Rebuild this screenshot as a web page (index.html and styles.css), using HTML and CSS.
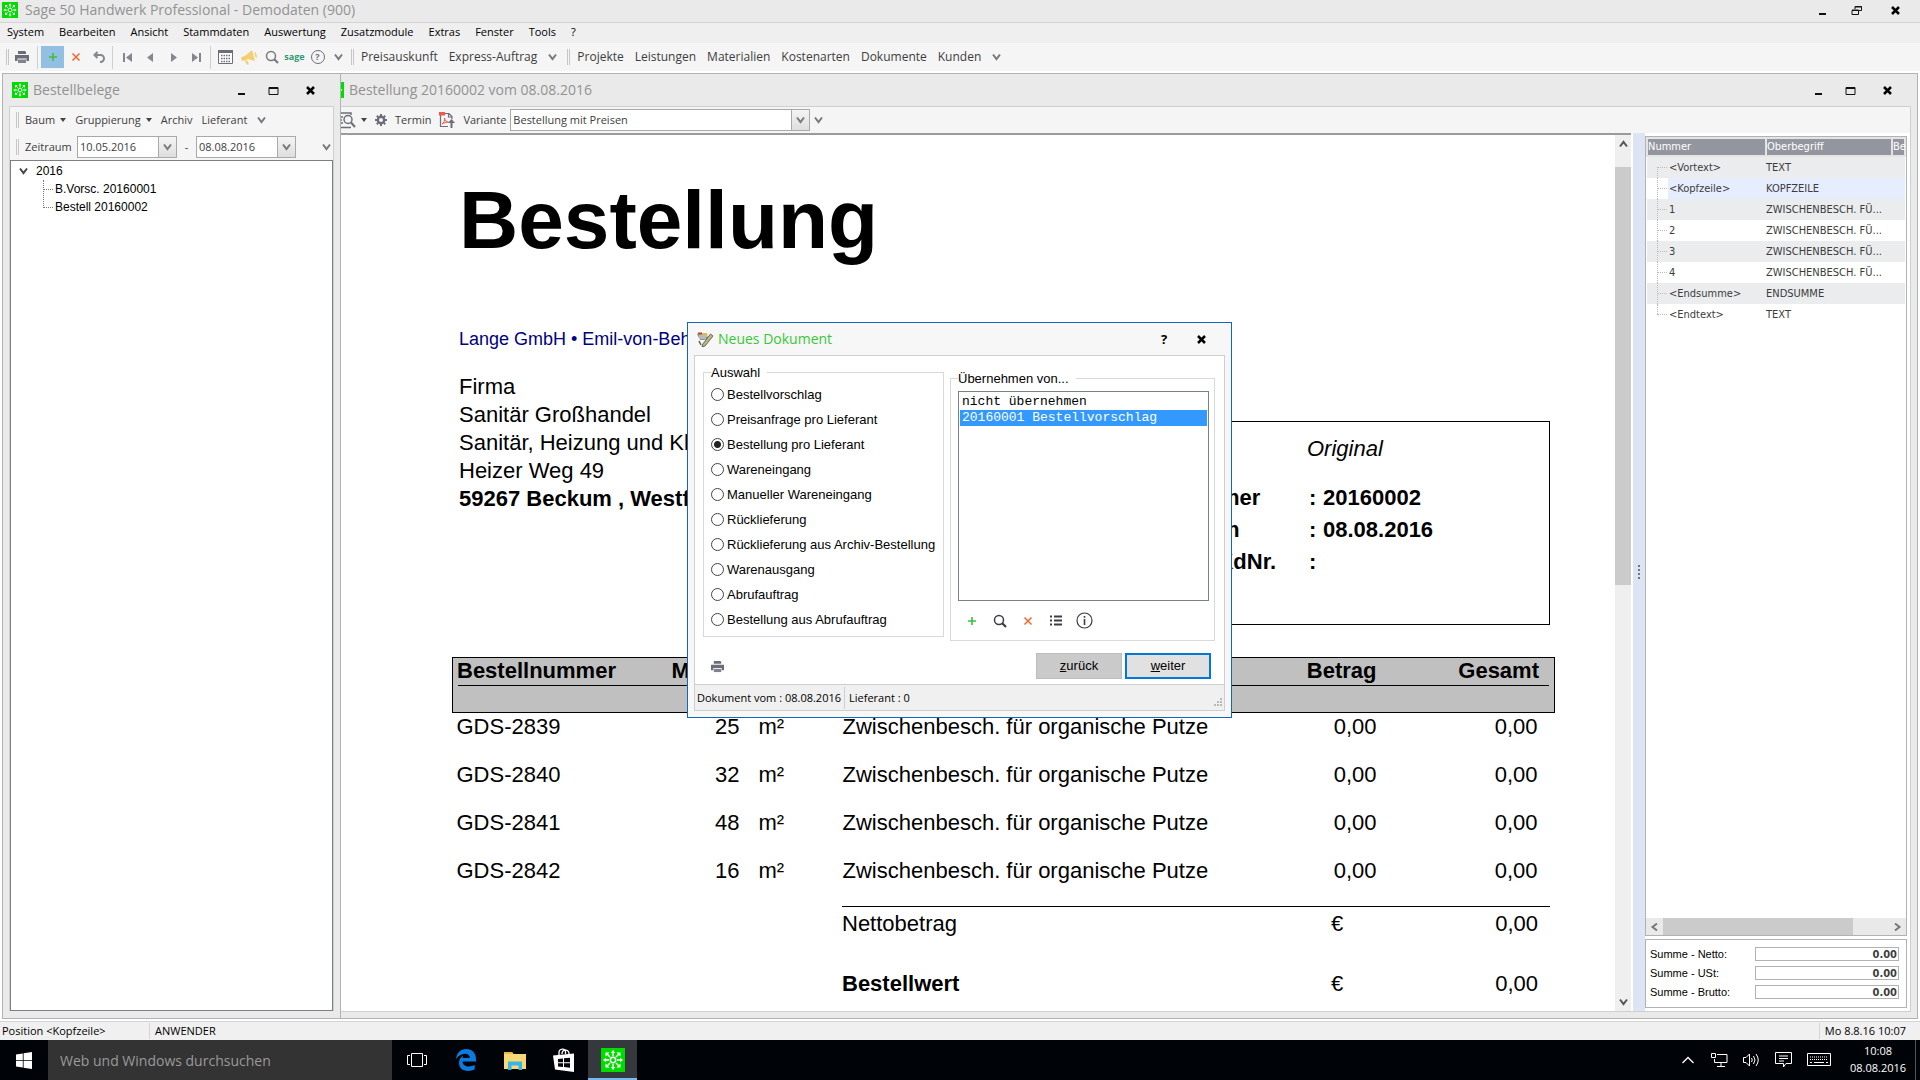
FILE: index.html
```html
<!DOCTYPE html>
<html lang="de">
<head>
<meta charset="utf-8">
<title>Sage 50 Handwerk Professional - Demodaten (900)</title>
<link rel="stylesheet" href="styles.css">
</head>
<body>
<svg class="symbols" aria-hidden="true">
  <symbol id="logo" viewBox="0 0 24 24">
    <rect width="24" height="24" fill="#00dc00"/>
    <g fill="none" stroke="#fff" stroke-width="1.400"><circle cx="12" cy="12" r="2.700"/><path d="M12 8V4M12 16v4M8 12H4M16 12h4M9 9 6 6M15 9l3-3M9 15l-3 3M15 15l3 3"/></g>
    <g fill="#fff"><path d="M12 2l2.200 3H9.800zM12 22l2.200-3H9.800zM2 12l3-2.200v4.400zM22 12l-3-2.200v4.400zM4.500 4.500h4l-4 4zM19.500 4.500h-4l4 4zM4.500 19.500h4l-4-4zM19.500 19.500h-4l4-4z"/></g>
  </symbol>
  <symbol id="chev" viewBox="0 0 9 8"><path d="M1 1.500 4.500 6 8 1.500" fill="none" stroke="currentColor" stroke-width="2"/></symbol>
  <symbol id="caret" viewBox="0 0 6 4"><path d="M0 0h6L3 4z" fill="#444"/></symbol>
  <symbol id="printer" viewBox="0 0 14 14"><path d="M3 1h7l1 1v2H3z" fill="#6b6e78"/><path d="M0 5h14v6h-2.500V8.500h-9V11H0z" fill="#6b6e78"/><path d="M3 9.500h8V13H3z" fill="#80838c"/></symbol>
  <symbol id="plus" viewBox="0 0 10 10"><path d="M5 1v8M1 5h8" stroke="#3cc03c" stroke-width="1.600"/></symbol>
  <symbol id="cross" viewBox="0 0 10 10"><path d="M1.500 1.500l7 7M8.500 1.500l-7 7" stroke="#f2682c" stroke-width="1.500"/></symbol>
  <symbol id="search" viewBox="0 0 14 14"><g fill="none" stroke="currentColor"><circle cx="6" cy="6" r="4.500" stroke-width="1.500"/><path d="M9.300 9.300 13 13" stroke-width="2.200"/></g></symbol>
  <symbol id="min" viewBox="0 0 11 11"><path d="M2 8h7v2H2z" fill="#111"/></symbol>
  <symbol id="max" viewBox="0 0 11 11"><path d="M1 2.500h9v7H1z" fill="none" stroke="#111"/><path d="M1 2h9v2H1z" fill="#111"/></symbol>
  <symbol id="restore" viewBox="0 0 11 11"><path d="M4 4V1.500h6.500v4H8" fill="none" stroke="#111"/><path d="M1 5.500h6.500v4H1z" fill="none" stroke="#111"/><path d="M4 1h6.500v1.500H4zM1 4.500h6.500V6H1z" fill="#111"/></symbol>
  <symbol id="close" viewBox="0 0 11 11"><path d="M2 2l7 7M9 2l-7 7" stroke="#000" stroke-width="2.500"/></symbol>
</svg>

<header class="titlebar titlebar-main">
  <svg class="logo"><use href="#logo"/></svg>
  <h1 class="caption">Sage 50 Handwerk Professional - Demodaten (900)</h1>
  <button class="winbtn" aria-label="Minimieren"><svg><use href="#min"/></svg></button>
  <button class="winbtn" aria-label="Wiederherstellen"><svg><use href="#restore"/></svg></button>
  <button class="winbtn winbtn-close" aria-label="Schließen"><svg><use href="#close"/></svg></button>
</header>

<nav class="menubar">
  <button>System</button><button>Bearbeiten</button><button>Ansicht</button><button>Stammdaten</button><button>Auswertung</button><button>Zusatzmodule</button><button>Extras</button><button>Fenster</button><button>Tools</button><button>?</button>
</nav>

<div class="toolbar toolbar-main">
  <span class="grip"></span>
  <button class="tool" aria-label="Drucken"><svg width="14" height="14"><use href="#printer"/></svg></button>
  <span class="sep"></span>
  <button class="tool tool-active" aria-label="Neu"><svg width="10" height="10"><use href="#plus"/></svg></button>
  <button class="tool" aria-label="Löschen"><svg width="10" height="10"><use href="#cross"/></svg></button>
  <button class="tool" aria-label="Rückgängig"><svg width="12" height="12" viewBox="0 0 12 12"><path d="M4.500 1 1.500 4l3 3M2 4h5.500a3 3 0 0 1 0 7H7" fill="none" stroke="#85878e" stroke-width="2"/></svg></button>
  <span class="sep"></span>
  <button class="tool" aria-label="Erster"><svg width="9" height="9" viewBox="0 0 9 9"><path d="M0 0h2v9H0zM9 0v9L3 4.500z" fill="#85878e"/></svg></button>
  <button class="tool" aria-label="Zurück"><svg width="9" height="9" viewBox="0 0 9 9"><path d="M7 0v9L1 4.500z" fill="#85878e"/></svg></button>
  <button class="tool" aria-label="Weiter"><svg width="9" height="9" viewBox="0 0 9 9"><path d="M2 0v9l6-4.500z" fill="#85878e"/></svg></button>
  <button class="tool" aria-label="Letzter"><svg width="9" height="9" viewBox="0 0 9 9"><path d="M7 0h2v9H7zM0 0v9l6-4.500z" fill="#85878e"/></svg></button>
  <span class="sep"></span>
  <button class="tool" aria-label="Kalender"><svg width="15" height="14" viewBox="0 0 15 14"><path d="M.5.500h14v13H.5z" fill="#fff" stroke="#6b6e78"/><path d="M0 0h15v3H0z" fill="#6b6e78"/><path d="M3 5.500h10M3 8.500h10M3 11.500h10" stroke="#6b6e78" stroke-width="1.500" stroke-dasharray="1.500 1"/></svg></button>
  <button class="tool" aria-label="Meldung"><svg width="16" height="16" viewBox="0 0 16 16"><path d="M11 1l3 11-7-2-3 1.500L1 12 0 8.500l4.500-2zM4 12l2-.8 2 4-2 .5z" fill="#f3cf72"/><path d="M14 3.500l1.500 5" stroke="#f3cf72" stroke-width="1.500"/></svg></button>
  <button class="tool" aria-label="Suchen"><svg width="14" height="14"><use href="#search"/></svg></button>
  <button class="tool tool-sage">sage</button>
  <button class="tool" aria-label="Hilfe"><span class="round">?</span></button>
  <button class="tool tool-chev" aria-label="Mehr"><svg width="9" height="8"><use href="#chev"/></svg></button>
  <span class="grip grip-gap"></span>
  <button class="word">Preisauskunft</button>
  <button class="word">Express-Auftrag</button>
  <button class="tool" aria-label="Mehr"><svg width="9" height="8"><use href="#chev"/></svg></button>
  <span class="grip"></span>
  <button class="word">Projekte</button><button class="word">Leistungen</button><button class="word">Materialien</button><button class="word">Kostenarten</button><button class="word">Dokumente</button><button class="word">Kunden</button>
  <button class="tool" aria-label="Mehr"><svg width="9" height="8"><use href="#chev"/></svg></button>
</div>

<main class="mdi">
  <section class="window window-left">
    <header class="titlebar">
      <svg class="logo"><use href="#logo"/></svg>
      <h2 class="caption">Bestellbelege</h2>
      <button class="winbtn" aria-label="Minimieren"><svg><use href="#min"/></svg></button>
      <button class="winbtn" aria-label="Maximieren"><svg><use href="#max"/></svg></button>
      <button class="winbtn winbtn-close" aria-label="Schließen"><svg><use href="#close"/></svg></button>
    </header>
    <div class="inner">
      <div class="toolbar toolbar-left">
        <span class="grip"></span>
        <button class="word small">Baum <svg width="6" height="4"><use href="#caret"/></svg></button>
        <button class="word small">Gruppierung <svg width="6" height="4"><use href="#caret"/></svg></button>
        <button class="word small">Archiv</button>
        <button class="word small">Lieferant</button>
        <button class="more" aria-label="Mehr"><svg width="9" height="8"><use href="#chev"/></svg></button>
      </div>
      <div class="toolbar toolbar-dates">
        <span class="grip"></span>
        <label class="small" for="from">Zeitraum</label>
        <span class="combo combo-date"><input id="from" value="10.05.2016"><button aria-label="Kalender öffnen"><svg width="9" height="8"><use href="#chev"/></svg></button></span>
        <span class="dash">-</span>
        <span class="combo combo-date"><input aria-label="Bis" value="08.08.2016"><button aria-label="Kalender öffnen"><svg width="9" height="8"><use href="#chev"/></svg></button></span>
        <button class="more push" aria-label="Mehr"><svg width="9" height="8"><use href="#chev"/></svg></button>
      </div>
      <div class="tree">
        <div class="tree-root"><svg width="9" height="8"><use href="#chev"/></svg><span class="dot"></span>2016</div>
        <ul>
          <li>B.Vorsc. 20160001</li>
          <li>Bestell 20160002</li>
        </ul>
      </div>
    </div>
  </section>

  <section class="window window-right">
    <header class="titlebar">
      <svg class="logo logo-cut" viewBox="20 0 4 24" preserveAspectRatio="none"><use href="#logo" width="24" height="24"/></svg>
      <h2 class="caption">Bestellung 20160002 vom 08.08.2016</h2>
      <button class="winbtn" aria-label="Minimieren"><svg><use href="#min"/></svg></button>
      <button class="winbtn" aria-label="Maximieren"><svg><use href="#max"/></svg></button>
      <button class="winbtn winbtn-close" aria-label="Schließen"><svg><use href="#close"/></svg></button>
    </header>
    <div class="inner">
      <div class="toolbar toolbar-doc">
        <button class="word" aria-label="Vorschau"><svg width="15" height="17" viewBox="1 0 15 17"><path d="M0 1h11v2M0 15.500h11M0 5h3M0 8h2M0 11h3" fill="none" stroke="#6b6e78" stroke-width="1.500"/><circle cx="8" cy="7.500" r="4" fill="none" stroke="#6b6e78" stroke-width="1.500"/><path d="M11 10.500l4 4.500" stroke="#6b6e78" stroke-width="2"/></svg><svg width="6" height="4"><use href="#caret"/></svg></button>
        <button class="word" aria-label="Einstellungen"><svg width="12" height="12" viewBox="0 0 12 12"><circle cx="6" cy="6" r="3.200" fill="none" stroke="#6b6e78" stroke-width="2.400"/><path d="M6 0v2M6 10v2M0 6h2M10 6h2M1.800 1.800l1.400 1.400M8.800 8.800l1.400 1.400M1.800 10.200l1.400-1.400M8.800 3.200l1.400-1.400" stroke="#6b6e78" stroke-width="2"/></svg></button>
        <button class="word small">Termin</button>
        <button class="word" aria-label="PDF"><svg width="16" height="16" viewBox="0 0 16 16"><path d="M1.500 3v11.500H9M6 1.500h4l3 3V7M9.500 1.500V5H13" fill="none" stroke="#6b6e78" stroke-width="1.200"/><path d="M0 0h6v3.500H0z" fill="#f0584c"/><path d="M3 12c2-1 3-4 2.500-6 .5 2.500 2 4 4 4.200C7 10 5 11 3 12z" fill="none" stroke="#f0584c"/><path d="M12.500 7l3.500 4h-2.500v5h-2v-5H9z" fill="#6b6e78"/></svg></button>
        <label class="small" for="variant">Variante</label>
        <span class="combo combo-variant"><select id="variant"><option>Bestellung mit Preisen</option></select><span class="arrow"><svg width="9" height="8"><use href="#chev"/></svg></span></span>
        <button class="more" aria-label="Mehr"><svg width="9" height="8"><use href="#chev"/></svg></button>
      </div>
      <div class="split">
        <div class="viewer">
          <article class="paper">
            <h3 class="doc-title">Bestellung</h3>
            <div class="letterhead">
              <div class="address">
                <p class="sender">Lange GmbH • Emil-von-Behring-Str.</p>
                <p>Firma</p>
                <p>Sanitär Großhandel</p>
                <p>Sanitär, Heizung und Klima</p>
                <p>Heizer Weg 49</p>
                <p><b>59267 Beckum , Westf.</b></p>
              </div>
              <div class="infobox">
                <p class="original">Original</p>
                <dl>
                  <dt>Nummer</dt><dd>:</dd><dd>20160002</dd>
                  <dt>Datum</dt><dd>:</dd><dd>08.08.2016</dd>
                  <dt>Ihre KdNr.</dt><dd>:</dd><dd></dd>
                </dl>
              </div>
            </div>
            <table class="positions">
              <colgroup><col class="c-nr"><col class="c-qty"><col class="c-unit"><col><col class="c-amount"><col class="c-total"></colgroup>
              <thead>
                <tr><th>Bestellnummer</th><th>Menge</th><th></th><th></th><th class="num">Betrag</th><th class="num last">Gesamt</th></tr>
                <tr><td colspan="6" class="rule"><hr></td></tr>
              </thead>
              <tbody>
                <tr><td>GDS-2839</td><td class="num qty">25</td><td class="unit">m²</td><td>Zwischenbesch. für organische Putze</td><td class="num">0,00</td><td class="num last">0,00</td></tr>
                <tr><td>GDS-2840</td><td class="num qty">32</td><td class="unit">m²</td><td>Zwischenbesch. für organische Putze</td><td class="num">0,00</td><td class="num last">0,00</td></tr>
                <tr><td>GDS-2841</td><td class="num qty">48</td><td class="unit">m²</td><td>Zwischenbesch. für organische Putze</td><td class="num">0,00</td><td class="num last">0,00</td></tr>
                <tr><td>GDS-2842</td><td class="num qty">16</td><td class="unit">m²</td><td>Zwischenbesch. für organische Putze</td><td class="num">0,00</td><td class="num last">0,00</td></tr>
              </tbody>
            </table>
            <div class="sums">
              <p><span>Nettobetrag</span><span>€</span><span class="val">0,00</span></p>
              <p><b>Bestellwert</b><span>€</span><span class="val">0,00</span></p>
            </div>
          </article>
          <div class="vscroll">
            <svg class="up" width="9" height="8"><use href="#chev"/></svg>
            <div class="vtrack"><div class="vthumb"></div></div>
            <svg width="9" height="8"><use href="#chev"/></svg>
          </div>
        </div>
        <div class="splitter"></div>
        <aside class="side">
          <div class="grid-box">
            <table class="grid">
              <colgroup><col class="g-nr"><col class="g-term"><col></colgroup>
              <thead><tr><th>Nummer</th><th>Oberbegriff</th><th>Be</th></tr></thead>
              <tbody>
                <tr><td class="first"><span>&lt;Vortext&gt;</span></td><td>TEXT</td><td></td></tr>
                <tr class="hot"><td><span>&lt;Kopfzeile&gt;</span></td><td>KOPFZEILE</td><td></td></tr>
                <tr><td><span>1</span></td><td>ZWISCHENBESCH. FÜ...</td><td></td></tr>
                <tr><td><span>2</span></td><td>ZWISCHENBESCH. FÜ...</td><td></td></tr>
                <tr><td><span>3</span></td><td>ZWISCHENBESCH. FÜ...</td><td></td></tr>
                <tr><td><span>4</span></td><td>ZWISCHENBESCH. FÜ...</td><td></td></tr>
                <tr><td><span>&lt;Endsumme&gt;</span></td><td>ENDSUMME</td><td></td></tr>
                <tr><td class="final"><span>&lt;Endtext&gt;</span></td><td>TEXT</td><td></td></tr>
              </tbody>
            </table>
            <div class="hscroll">
              <svg class="left" width="9" height="8"><use href="#chev"/></svg>
              <div class="htrack"><div class="hthumb"></div></div>
              <svg class="right" width="9" height="8"><use href="#chev"/></svg>
            </div>
          </div>
          <div class="totals">
            <label for="net">Summe - Netto:</label><input id="net" value="0.00">
            <label for="vat">Summe - USt:</label><input id="vat" value="0.00">
            <label for="gross">Summe - Brutto:</label><input id="gross" value="0.00">
          </div>
        </aside>
      </div>
    </div>
  </section>
</main>

<footer class="statusbar">
  <span class="status-pos">Position &lt;Kopfzeile&gt;</span>
  <span class="status-user">ANWENDER</span>
  <span class="status-time">Mo 8.8.16 10:07</span>
</footer>

<div class="taskbar">
  <button class="start" aria-label="Start"><svg width="16" height="17" viewBox="0 0 16 17"><path d="M0 2.500 6.800 1.500V8H0zM7.600 1.300 16 0v8H7.600zM0 8.800h6.800v6.700L0 14.500zM7.600 8.800H16V17l-8.400-1.300z" fill="#fff"/></svg></button>
  <input class="websearch" aria-label="Suche" placeholder="Web und Windows durchsuchen">
  <button class="task" aria-label="Aktive Anwendungen"><svg width="20" height="14" viewBox="0 0 20 14"><path d="M4.500.500h11v13h-11zM3 2.500H.5v9H3M17 2.500h2.500v9H17" fill="none" stroke="#fff"/></svg></button>
  <button class="task" aria-label="Edge"><svg width="20" height="22" viewBox="0 0 20 22"><path d="M0 10C.6 4 4.500 0 10.300 0 16 0 20 4 20 9.800V12.500H6.500c.2 3.400 3 5 6.200 5 2.200 0 4.200-.6 6-1.700v4.500C16.800 21.400 14.500 22 12 22 6.500 22 3 18.800 3 13.800c0-3.200 1.600-6 4.600-7.600C6.900 7 6.600 8 6.500 9h7.300c0-2.700-1.500-4.300-4.600-4.300C5.400 4.700 2.200 6.800 0 10z" fill="#0a7be0"/></svg></button>
  <button class="task" aria-label="Explorer"><svg width="22" height="19" viewBox="0 0 22 19"><path d="M0 1h8l1.500 2H22v15H0z" fill="#f8d775"/><path d="M0 1h8l1.500 2H0z" fill="#e6b84a"/><path d="M4 19v-8.500h14V19h-3.500v-4.500h-7V19z" fill="#35b6ea"/></svg></button>
  <button class="task" aria-label="Store"><svg width="22" height="24" viewBox="0 0 22 24"><path d="M6 7V4.500c0-4 6.500-5 6.500-.5V6M9 6c0-5 7-5 7-.5V6" fill="none" stroke="#fff" stroke-width="1.300"/><path d="M0 7.500 21 5.500V24L2 21.500z" fill="#fff"/><path d="M5 11l5-.5v3.800H5zM11 10.300l6-.5v4.500h-6zM5 15.200h5V19l-5-.5zM11 15.200h6v4.500l-6-.6z" fill="#000408"/></svg></button>
  <button class="task task-active" aria-label="Sage 50"><svg width="24" height="24"><use href="#logo"/></svg></button>
  <div class="tray">
    <svg width="16" height="8" viewBox="0 0 16 8"><path d="M2.500 7 8 1.500 13.500 7" fill="none" stroke="#fff" stroke-width="1.300"/></svg>
    <svg width="17" height="14" viewBox="0 0 17 14"><path d="M6 1.500h10v8H3.500V6M10 10v3M6 13.500h8M.5.500h4v4h-4z" fill="none" stroke="#fff"/></svg>
    <svg width="17" height="14" viewBox="0 0 17 14"><path d="M.5 4.500H3L6.500 1v12L3 9.500H.5zM8.500 5q1.500 2 0 4M10.500 3q3 4 0 8M13 1q4.500 6 0 12" fill="none" stroke="#fff"/></svg>
    <svg width="17" height="16" viewBox="0 0 17 16"><path d="M.5.500h16v11H11L8.500 15V11.500h-8zM4 4h9M4 6.500h9M4 9h5" fill="none" stroke="#fff"/></svg>
    <svg width="24" height="14" viewBox="0 0 24 14"><path d="M.5.500h23v12H.5z" fill="none" stroke="#fff"/><path d="M3 4h18M3 6.500h18" stroke="#fff" stroke-dasharray="1 1"/><path d="M3 9.500h2M7 9.500h10M19 9.500h2" stroke="#fff"/></svg>
    <p class="clock">10:08<br>08.08.2016</p>
    <span class="show-desktop"></span>
  </div>
</div>

<div class="dialog" role="dialog" aria-labelledby="dlg-title">
  <header class="dialog-title">
    <svg width="16" height="16" viewBox="0 0 16 16"><path d="M0 3h10l1 5-4 1H3z" fill="#8a8f8a"/><path d="M1 1.500h4V3H1z" fill="#c03a2a"/><path d="M5 2h5v2H5z" fill="#e8b93a"/><path d="M2 5h8M2 7h7" stroke="#e4e8e4"/><path d="M13.500 3 16 5l-8 10-3 1 .8-3z" fill="#b8b884" stroke="#4d5040" stroke-width=".8"/><path d="M2 10l2 4" stroke="#58664e" stroke-width="1.500"/></svg>
    <h2 id="dlg-title">Neues Dokument</h2>
    <button class="winbtn help">?</button>
    <button class="winbtn winbtn-close" aria-label="Schließen"><svg><use href="#close"/></svg></button>
  </header>
  <div class="dialog-frame">
    <div class="dialog-body">
      <fieldset class="choice">
        <legend>Auswahl</legend>
        <label><input type="radio" name="kind">Bestellvorschlag</label>
        <label><input type="radio" name="kind">Preisanfrage pro Lieferant</label>
        <label><input type="radio" name="kind" checked>Bestellung pro Lieferant</label>
        <label><input type="radio" name="kind">Wareneingang</label>
        <label><input type="radio" name="kind">Manueller Wareneingang</label>
        <label><input type="radio" name="kind">Rücklieferung</label>
        <label><input type="radio" name="kind">Rücklieferung aus Archiv-Bestellung</label>
        <label><input type="radio" name="kind">Warenausgang</label>
        <label><input type="radio" name="kind">Abrufauftrag</label>
        <label><input type="radio" name="kind">Bestellung aus Abrufauftrag</label>
      </fieldset>
      <fieldset class="source">
        <legend>Übernehmen von...</legend>
        <select size="13" aria-label="Übernehmen von">
          <option>nicht übernehmen</option>
          <option selected>20160001 Bestellvorschlag</option>
        </select>
        <div class="source-tools">
          <button aria-label="Neu"><svg width="10" height="10"><use href="#plus"/></svg></button>
          <button aria-label="Suchen"><svg width="14" height="14"><use href="#search"/></svg></button>
          <button aria-label="Löschen"><svg width="10" height="10"><use href="#cross"/></svg></button>
          <button aria-label="Liste"><svg width="12" height="11" viewBox="0 0 12 11"><path d="M0 1.500h2M0 5.500h2M0 9.500h2M4 1.500h8M4 5.500h8M4 9.500h8" stroke="#3a3d46" stroke-width="2"/></svg></button>
          <button aria-label="Info"><svg width="17" height="17" viewBox="0 0 17 17"><circle cx="8.500" cy="8.500" r="7.500" fill="none" stroke="#3a3d46" stroke-width="1.200"/><path d="M8.500 7v6M8.500 4v1.800" stroke="#3a3d46" stroke-width="1.600"/></svg></button>
        </div>
      </fieldset>
    </div>
    <div class="dialog-actions">
      <button class="print" aria-label="Drucken"><svg width="13" height="13"><use href="#printer"/></svg></button>
      <button class="btn"><u>z</u>urück</button>
      <button class="btn btn-default"><u>w</u>eiter</button>
    </div>
    <footer class="dialog-status">
      <span>Dokument vom : 08.08.2016</span><span>Lieferant : 0</span>
      <svg width="9" height="9" viewBox="0 0 9 9"><path d="M7 0h2v2H7zM7 3h2v2H7zM7 6h2v2H7zM4 3h2v2H4zM4 6h2v2H4zM1 6h2v2H1z" fill="#b8b8b8"/></svg>
    </footer>
  </div>
</div>
</body>
</html>
```
FILE: styles.css
```css
* { box-sizing: border-box; }

:root {
  --ui: "Open Sans", "Noto Sans", sans-serif;
  --arial: "Liberation Sans", Arial, sans-serif;
  --tahoma: "DejaVu Sans Condensed", "DejaVu Sans", sans-serif;
  --line: #cfcfcf;
}

body {
  margin: 0;
  height: 100vh;
  display: flex;
  flex-direction: column;
  overflow: hidden;
  background: #fff;
  color: #000;
  font: 11px/16px var(--ui);
}

h1, h2, h3, p, ul, dl { margin: 0; padding: 0; font-weight: 400; }
dd { margin: 0; }
button { margin: 0; padding: 0; border: 0; background: none; font: inherit; color: inherit; }
input, select { font: inherit; color: inherit; }
svg { display: block; flex: none; }
.symbols { position: absolute; width: 0; height: 0; }

/* Title bars */
.titlebar { display: flex; align-items: center; height: 32px; padding: 0 9px; gap: 5px; background: #eaeaea; flex: none; }
.titlebar-main { height: 23px; padding: 0 4px 2px 2px; gap: 7px; border-bottom: 1px solid #d4d4d4; }
.caption { flex: 1; font-size: 14px; line-height: 20px; color: #929292; white-space: nowrap; }
.logo { width: 16px; height: 16px; }
.window-right .titlebar { padding-left: 0; }
.logo-cut { width: 3px; }
.winbtn { width: 32px; height: 20px; display: flex; align-items: center; justify-content: center; }
.titlebar .winbtn { margin-left: -5px; }
.winbtn svg { width: 11px; height: 11px; }
.titlebar .winbtn-close { width: 42px; }

.menubar { display: flex; gap: 15px; height: 20px; padding: 0 7px 2px; align-items: center; background: #efefef; flex: none; }

/* Toolbars */
.toolbar { display: flex; align-items: center; background: #f5f5f5; color: #3d3d3d; flex: none; }
.toolbar svg { color: #77797f; }
.toolbar-main { height: 28px; padding-left: 6px; font-size: 12px; }
.grip { width: 3px; height: 16px; border: solid #c6c6c6; border-width: 0 1px; flex: none; }
.grip-gap { margin-left: 3px; }
.sep { width: 1px; height: 23px; background: #cfcfcf; margin: 0 3px 0 2px; }
.tool { width: 23px; height: 22px; display: flex; align-items: center; justify-content: center; }
.tool:nth-child(2) { width: 26px; }
.tool-active { background: #93c0e2; }
.tool-sage { color: #2e9b70; font: 700 9px/12px var(--ui); }
.tool-chev { width: 19px; }
.round { width: 14px; height: 14px; border: 1px solid #6b6e78; border-radius: 50%; font: 700 9px/12px var(--ui); text-align: center; color: #6b6e78; }
.word { display: flex; align-items: center; gap: 5px; margin-right: 11px; white-space: nowrap; }
.grip + .word { margin-left: 7px; }
.toolbar-main .word + .tool { margin-left: -6px; margin-right: 5px; width: 20px; }
.small { font-size: 11px; }
.toolbar-left { height: 26px; padding-left: 6px; }
.toolbar-left .grip + .word { margin-left: 6px; }
.toolbar-left .word { margin-right: 9px; }
.toolbar-left .more { margin-left: 1px; }
.toolbar-dates { height: 27px; padding: 0 2px 0 6px; }
.toolbar-dates label { margin-left: 6px; width: 52px; }
.dash { width: 19px; text-align: center; }
.push { margin-left: auto; }
.combo { display: flex; height: 22px; border: 1px solid #a9a9a9; background: #fff; }
.combo input, .combo select { flex: 1; min-width: 0; border: 0; padding: 0 2px; background: #fff; appearance: none; outline: 0; }
.combo button, .combo .arrow { width: 18px; display: flex; align-items: center; justify-content: center; border-left: 1px solid #a9a9a9; background: linear-gradient(#f4f4f4, #dedede); }
.combo-date { width: 100px; }
.combo-variant { width: 300px; margin: 0 4px; }
.toolbar-doc { height: 26px; }
.toolbar-doc .word { margin-right: 8px; }

/* MDI windows */
.mdi { flex: 1; display: flex; min-height: 0; padding: 2px; }
.window { display: flex; flex-direction: column; background: #eaeaea; border: 1px solid #b2b2b2; min-width: 0; }
.window-left { width: 339px; flex: none; }
.window-right { flex: 1; border-left: 0; }
.inner { flex: 1; display: flex; flex-direction: column; min-height: 0; border: 1px solid var(--line); background: #f5f5f5; margin: 0 6px 6px; }
.window-left .inner { margin-bottom: 7px; border-bottom: 0; }
.window-right .inner { margin-left: 0; border-left: 0; }

.tree { flex: 1; border: 1px solid #7b8088; background: #fff; padding: 1px 8px; font: 12px/18px var(--arial); }
.tree-root { display: flex; align-items: center; }
.tree-root svg { color: #444; }
.dot { width: 8px; }
.tree ul { list-style: none; margin-left: 24px; }
.tree li { position: relative; padding-left: 12px; }
.tree li::before { content: ""; position: absolute; left: 0; top: 0; width: 9px; height: 9px; border: dotted #777; border-width: 0 0 1px 1px; }
.tree li + li::before { top: -9px; height: 18px; }

.split { flex: 1; display: flex; min-height: 0; background: #fff; }
.viewer { flex: 1; display: flex; min-width: 0; border-top: 2px solid #9b9b9b; margin-right: 2px; overflow: hidden; }
.splitter { width: 12px; background: #dde5f5; flex: none; display: flex; align-items: center; justify-content: center; }
.splitter::before { content: ""; height: 14px; border-left: 2px dotted #777; }

/* Order form */
.paper { flex: 1; min-width: 0; padding: 38px 60px 0 111px; font: 22px/28px var(--arial); }
.doc-title { font-weight: 700; font-size: 82px; line-height: 94px; padding-left: 7px; }
.letterhead { display: flex; justify-content: space-between; margin-top: 61px; padding: 0 5px 0 7px; }
.address { white-space: nowrap; }
.sender { font-size: 18px; line-height: 22px; color: #000080; margin-bottom: 23px; }
.infobox { width: 400px; height: 204px; margin-top: 93px; padding: 13px 0 0 20px; border: 1px solid #000; }
.original { font-style: italic; padding-left: 136px; margin-bottom: 19px; }
.infobox dl { display: grid; grid-template-columns: 138px 14px 1fr; font-weight: 700; line-height: 32px; }
.positions { width: 100%; margin-top: 32px; border-collapse: collapse; table-layout: fixed; }
.c-nr { width: 219px; }
.c-qty { width: 70px; }
.c-unit { width: 101px; }
.c-amount { width: 100px; }
.c-total { width: 178px; }
.positions thead { background: #c0c0c0; border: 1px solid #000; }
.positions th { height: 27px; padding: 0; line-height: 26px; text-align: left; vertical-align: top; white-space: nowrap; }
.positions th:first-child, .positions td:first-child { padding-left: 4px; }
.positions td { height: 48px; padding: 0; vertical-align: top; white-space: nowrap; }
.positions td.rule { height: 28px; padding: 0 5px; }
.rule hr { margin: 0; border: 0; border-top: 1px solid #000; }
.positions .num { text-align: right; }
.positions .qty { padding-right: 2px; }
.positions td.last { padding-right: 17px; }
.positions th.last { padding-right: 15px; }
.positions td.unit { padding-left: 17px; }
.sums { margin: 1px 5px 0 390px; border-top: 1px solid #000; padding-top: 3px; }
.sums p { display: grid; grid-template-columns: 1fr 110px 109px; height: 60px; }
.sums .val { text-align: right; padding-right: 12px; }

.vscroll { width: 16px; flex: none; display: flex; flex-direction: column; align-items: center; padding: 5px 0; background: #efefef; color: #555; }
.vscroll .up { transform: rotate(180deg); }
.vtrack { flex: 1; width: 100%; padding: 19px 0 12px; }
.vthumb { height: 51%; background: #cbcbcb; }

/* Position grid */
.side { width: 265px; flex: none; display: flex; flex-direction: column; gap: 3px; padding: 3px 3px 3px 0; }
.grid-box { flex: 1; display: flex; flex-direction: column; border: 1px solid #b2b2b2; overflow: hidden; }
.grid { width: 100%; table-layout: fixed; border-collapse: collapse; font: 11px/21px var(--tahoma); color: #3c3c3c; }
.g-nr { width: 119px; }
.g-term { width: 126px; }
.grid th { padding: 0; background: #93969e; color: #fff; font-weight: 400; text-align: left; line-height: 16px; border: 2px solid #e4e4e4; white-space: nowrap; }
.grid td { height: 21px; padding: 0; white-space: nowrap; }
.grid td:first-child { padding-left: 10px; }
.grid tbody tr:nth-child(odd) { background: #eaecee; }
.grid .hot { background: linear-gradient(90deg, #fff 21px, #e6edff 21px); }
.grid td:first-child span { display: block; position: relative; padding-left: 12px; }
.grid td:first-child span::before { content: ""; position: absolute; left: 0; top: 0; width: 10px; height: 10px; border-bottom: 1px dotted #bbb; }
.grid td:first-child span::after { content: ""; position: absolute; left: 0; top: 0; height: 21px; border-left: 1px dotted #bbb; }
.grid td.first span::after { top: 10px; height: 11px; }
.grid td.final span::after { height: 10px; }
.hscroll { display: flex; align-items: center; height: 17px; margin-top: auto; padding: 0 4px; background: #e9e9e9; color: #777; }
.hscroll .left { transform: rotate(90deg); }
.hscroll .right { transform: rotate(270deg); }
.htrack { flex: 1; height: 100%; padding: 0 4px; }
.hthumb { width: 84%; height: 100%; background: #cbcbcb; }
.totals { display: grid; grid-template-columns: 105px 144px; align-content: start; row-gap: 5px; padding: 7px 4px; height: 69px; border: 1px solid #b2b2b2; font: 11px/14px var(--arial); }
.totals input { height: 14px; padding: 1px 1px 0; border: 1px solid #b2b2b2; text-align: right; font: 700 11px/12px var(--tahoma); color: #3c3c3c; }

.statusbar { display: flex; height: 19px; align-items: center; background: #f0f0f0; border-top: 1px solid #d4d4d4; padding: 0 14px 0 2px; flex: none; }
.status-pos { width: 147px; }
.status-user { border-left: 1px solid #d4d4d4; padding-left: 5px; }
.status-time { margin-left: auto; border-left: 1px solid #d4d4d4; padding-left: 5px; }

/* Taskbar */
.taskbar { display: flex; height: 40px; background: #000408; color: #fff; flex: none; }
.start { width: 48px; display: flex; align-items: center; justify-content: center; }
.websearch { width: 344px; border: 0; padding: 1px 12px 0; background: #333; font-size: 14px; color: #fff; }
.websearch::placeholder { color: #9a9a9a; opacity: 1; }
.task { width: 49px; display: flex; align-items: center; justify-content: center; }
.task-active { background: #35383c; border-bottom: 2px solid #76b9ed; border-top: 2px solid #35383c; }
.tray { display: flex; align-items: center; gap: 15px; margin-left: auto; }
.clock { width: 60px; text-align: center; line-height: 17px; padding-bottom: 2px; margin-left: 2px; }
.show-desktop { width: 5px; height: 100%; border-left: 1px solid #555; margin-left: -8px; }

/* Dialog */
.dialog { position: absolute; left: 687px; top: 322px; width: 545px; padding: 0 6px 6px; background: #f7f7f7; border: 1px solid #1467b5; }
.dialog-title { display: flex; align-items: center; height: 32px; padding: 0 8px 0 3px; gap: 5px; }
.dialog-title h2 { flex: 1; font-size: 14px; line-height: 20px; color: #37c837; }
.help { font-weight: 700; font-size: 13px; }
.dialog-frame { border: 1px solid var(--line); background: #fff; }
.dialog-body { display: flex; align-items: flex-start; gap: 6px; padding: 9px 9px 0 8px; font: 13px/15px var(--arial); }
fieldset { margin: 0; border: 1px solid #d9d9d9; min-width: 0; }
legend { padding: 0 7px 0 0; }
.choice { width: 241px; padding: 2px 7px 4px; }
.choice label { display: flex; align-items: center; height: 25px; gap: 3px; white-space: nowrap; }
.choice input { appearance: none; width: 13px; height: 13px; margin: 0; border: 1px solid #444; border-radius: 50%; background: #fff; flex: none; }
.choice input:checked { background: radial-gradient(circle, #222 3px, #fff 4px); }
.source { flex: 1; margin-top: 6px; padding: 5px 5px 0 7px; }
.source select { display: block; width: 100%; height: 210px; padding: 2px 1px; border: 1px solid #7b8088; border-radius: 0; background: #fff; font: 13px/16px "Liberation Mono", monospace; overflow: hidden; outline: 0; }
.source option { padding: 0 2px; min-height: 16px; line-height: 16px; }
.source option:checked { background: #3399ff linear-gradient(#3399ff, #3399ff); color: #fff; }
.source-tools { display: flex; align-items: center; height: 39px; color: #3a3d46; }
.source-tools button { width: 28px; display: flex; justify-content: center; }
.dialog-actions { display: flex; align-items: center; gap: 3px; padding: 12px 13px 5px 16px; }
.print { margin-right: auto; }
.btn { width: 86px; height: 26px; background: #cacaca; border: 1px solid #bdbdbd; font: 13px/16px var(--arial); }
.btn-default { background: #e1e1e1; border: 2px solid #0078d7; }
.dialog-status { display: flex; align-items: center; height: 26px; padding: 2px; background: #f0f0f0; border-top: 1px solid var(--line); }
.dialog-status span { white-space: nowrap; line-height: 22px; }
.dialog-status span + span { border-left: 1px solid var(--line); margin-left: 3px; padding-left: 4px; }
.dialog-status svg { margin: 10px 0 0 auto; }
```
